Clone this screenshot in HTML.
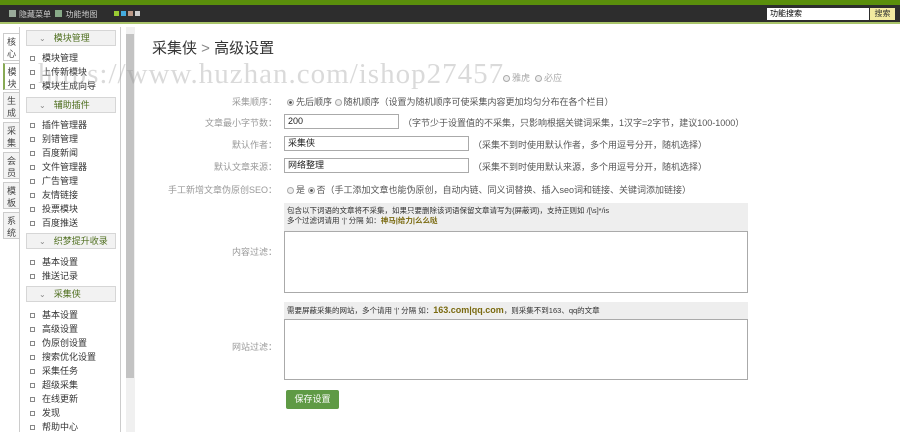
<!DOCTYPE html>
<html><head><meta charset="utf-8"><style>
*{margin:0;padding:0;box-sizing:border-box}
body{width:900px;height:432px;overflow:hidden;background:#fff;font-family:"Liberation Sans","Noto Sans CJK SC",sans-serif;font-size:9px;color:#333;position:relative}
.a{position:absolute;white-space:nowrap}
.tab{position:absolute;left:3px;width:16px;background:#f3f3f3;border:1px solid #ccc;border-right:none;font-size:9px;line-height:12px;text-align:center;padding-top:2px;color:#444}
.hd{position:absolute;left:26px;width:90px;height:16px;background:#f2f2f2;border:1px solid #d6d6d6;color:#4f6f1f;font-size:9px;line-height:14px;padding-left:12px}
.hd:before{content:"⌄";color:#888;margin-right:8px;font-size:8px}
.it{position:absolute;left:30px;font-size:9px;color:#333}
.it:before{content:"";display:inline-block;width:3px;height:3px;border:1px solid #888;margin-right:7px;vertical-align:middle}
.lb{position:absolute;right:623px;color:#999;font-size:9px;text-align:right}
.rd{display:inline-block;width:7px;height:7px;border-radius:50%;border:1px solid #aaa;background:#eee;margin-right:2px;vertical-align:-1px}
.rd.on{background:radial-gradient(#555 35%,#eee 45%)}
.in{position:absolute;left:284px;height:15px;border:1px solid #aaa;font-size:9px;line-height:13px;padding-left:3px;color:#222}
.tx{color:#555}
</style></head><body>
<div class="a" style="left:0;top:0;width:900px;height:5px;background:#5a8e0c"></div>
<div class="a" style="left:0;top:5px;width:900px;height:17px;background:#2d2d2d"></div>
<div class="a" style="left:0;top:22px;width:900px;height:2px;background:#a9c46a"></div>
<div class="a" style="left:9px;top:9px;color:#ccc;font-size:8px"><span style="display:inline-block;width:7px;height:7px;background:#9a9;margin-right:3px"></span>隐藏菜单 &nbsp;<span style="display:inline-block;width:7px;height:7px;background:#8a8;margin-right:3px"></span>功能地图</div>
<div class="a" style="left:114px;top:11px;width:5px;height:5px;background:#9c3"></div>
<div class="a" style="left:121px;top:11px;width:5px;height:5px;background:#4ad"></div>
<div class="a" style="left:128px;top:11px;width:5px;height:5px;background:#b98"></div>
<div class="a" style="left:135px;top:11px;width:5px;height:5px;background:#ccc"></div>
<div class="a" style="left:767px;top:8px;width:102px;height:12px;background:#fff;font-size:8px;line-height:12px;padding-left:3px;color:#000">功能搜索</div>
<div class="a" style="left:870px;top:8px;width:25px;height:12px;background:#f3eaa0;font-size:8px;line-height:12px;text-align:center;color:#333">搜索</div>

<div class="a" style="left:19px;top:27px;width:1px;height:405px;background:#ccc"></div>
<div class="tab" style="top:33px;height:28px;background:#fff">核<br>心</div>
<div class="tab" style="top:63px;height:27px;background:#fff;border-left:2px solid #8a5">模<br>块</div>
<div class="tab" style="top:92px;height:27px">生<br>成</div>
<div class="tab" style="top:122px;height:27px">采<br>集</div>
<div class="tab" style="top:152px;height:27px">会<br>员</div>
<div class="tab" style="top:182px;height:27px">模<br>板</div>
<div class="tab" style="top:212px;height:27px">系<br>统</div>
<div class="a" style="left:120px;top:27px;width:1px;height:405px;background:#ccc"></div>
<div class="a" style="left:126px;top:27px;width:9px;height:405px;background:#f0f0f0"></div>
<div class="a" style="left:126px;top:34px;width:8px;height:344px;background:#c3c3c3"></div>

<div class="hd" style="top:30px">模块管理</div>
<div class="it" style="top:51px">模块管理</div>
<div class="it" style="top:65px">上传新模块</div>
<div class="it" style="top:79px">模块生成向导</div>
<div class="hd" style="top:97px">辅助插件</div>
<div class="it" style="top:118px">插件管理器</div>
<div class="it" style="top:132px">别错管理</div>
<div class="it" style="top:146px">百度新闻</div>
<div class="it" style="top:160px">文件管理器</div>
<div class="it" style="top:174px">广告管理</div>
<div class="it" style="top:188px">友情链接</div>
<div class="it" style="top:202px">投票模块</div>
<div class="it" style="top:216px">百度推送</div>
<div class="hd" style="top:233px">织梦提升收录</div>
<div class="it" style="top:255px">基本设置</div>
<div class="it" style="top:269px">推送记录</div>
<div class="hd" style="top:286px">采集侠</div>
<div class="it" style="top:308px">基本设置</div>
<div class="it" style="top:322px">高级设置</div>
<div class="it" style="top:336px">伪原创设置</div>
<div class="it" style="top:350px">搜索优化设置</div>
<div class="it" style="top:364px">采集任务</div>
<div class="it" style="top:378px">超级采集</div>
<div class="it" style="top:392px">在线更新</div>
<div class="it" style="top:406px">发现</div>
<div class="it" style="top:420px">帮助中心</div>

<div class="a" style="left:152px;top:37px;font-size:15px;color:#333">采集侠 <span style="color:#888">&gt;</span> 高级设置</div>
<div class="a" style="left:38px;top:58px;font-family:'Liberation Serif',serif;font-size:29px;letter-spacing:1px;color:rgba(150,150,150,.35)">https://www.huzhan.com/ishop27457</div>
<div class="a tx" style="left:503px;top:71px;color:#aaa"><span class="rd"></span>雅虎 &nbsp;<span class="rd"></span>必应</div>

<div class="lb" style="top:95px">采集顺序：</div>
<div class="a tx" style="left:287px;top:95px"><span class="rd on"></span>先后顺序 <span class="rd"></span>随机顺序（设置为随机顺序可使采集内容更加均匀分布在各个栏目）</div>
<div class="lb" style="top:116px">文章最小字节数：</div>
<div class="in" style="top:114px;width:115px">200</div>
<div class="a tx" style="left:403px;top:116px">（字节少于设置值的不采集，只影响根据关键词采集，1汉字=2字节，建议100-1000）</div>
<div class="lb" style="top:138px">默认作者：</div>
<div class="in" style="top:136px;width:185px">采集侠</div>
<div class="a tx" style="left:473px;top:138px">（采集不到时使用默认作者，多个用逗号分开，随机选择）</div>
<div class="lb" style="top:160px">默认文章来源：</div>
<div class="in" style="top:158px;width:185px">网络整理</div>
<div class="a tx" style="left:473px;top:160px">（采集不到时使用默认来源，多个用逗号分开，随机选择）</div>
<div class="lb" style="top:183px">手工新增文章伪原创SEO：</div>
<div class="a tx" style="left:287px;top:183px"><span class="rd"></span>是 <span class="rd on"></span>否（手工添加文章也能伪原创，自动内链、同义词替换、插入seo词和链接、关键词添加链接）</div>

<div class="a" style="left:284px;top:203px;width:464px;height:29px;background:#eee;font-size:7.5px;line-height:10px;padding:3px 3px;color:#333;white-space:normal">包含以下词语的文章将不采集，如果只要删除该词语保留文章请写为{屏蔽词}，支持正则如 /[\s]*/is<br>多个过滤词请用 ‘|’ 分隔 如：<b style="color:#7a6a10">神马|给力|么么哒</b></div>
<div class="a" style="left:284px;top:231px;width:464px;height:62px;border:1px solid #aaa;background:#fff"></div>
<div class="lb" style="top:245px">内容过滤：</div>
<div class="a" style="left:284px;top:302px;width:464px;height:17px;background:#eee;font-size:7.5px;line-height:17px;padding-left:3px;color:#333">需要屏蔽采集的网站，多个请用 ‘|’ 分隔 如：<b style="color:#7a6a10;font-size:9px">163.com|qq.com</b>，则采集不到163、qq的文章</div>
<div class="a" style="left:284px;top:319px;width:464px;height:61px;border:1px solid #aaa;background:#fff"></div>
<div class="lb" style="top:340px">网站过滤：</div>
<div class="a" style="left:286px;top:390px;width:53px;height:19px;background:#5f9a45;border-radius:2px;color:#fff;font-size:9px;line-height:19px;text-align:center">保存设置</div>
</body></html>
